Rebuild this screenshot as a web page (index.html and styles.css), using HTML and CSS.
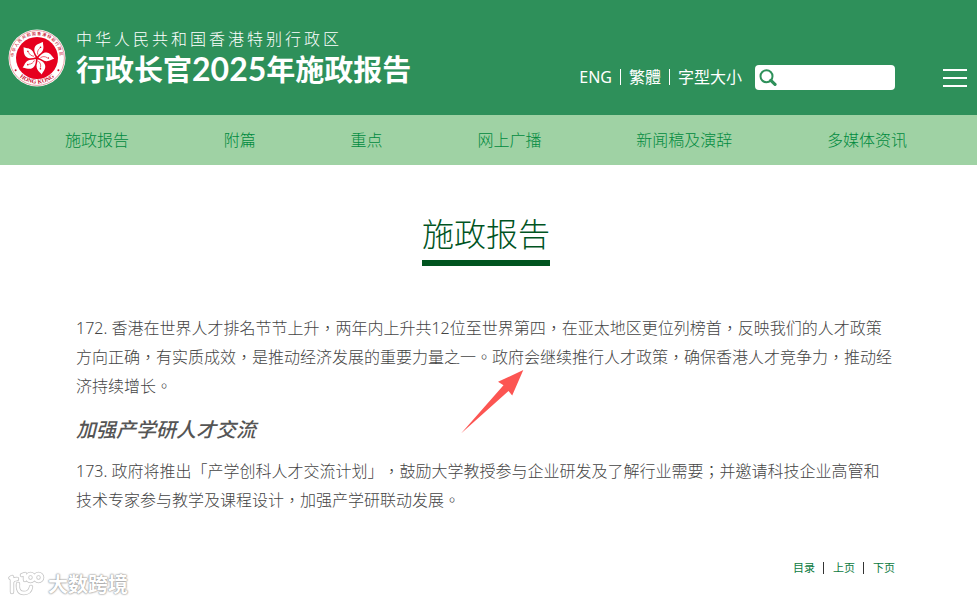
FILE: index.html
```html
<!DOCTYPE html>
<html lang="zh-Hans">
<head>
<meta charset="utf-8">
<meta name="viewport" content="width=device-width, initial-scale=1">
<title>行政长官2025年施政报告</title>
<link rel="stylesheet" href="styles.css">
</head>
<body>
<header class="masthead">
  <a class="brand" href="#">
    <svg class="seal" viewBox="0 0 58 58" aria-hidden="true">
      <defs>
        <path id="ring-top" d="M8.2 39.5A23.2 23.2 0 1 1 49.8 39.5"/>
        <path id="ring-bottom" d="M9 45.2A26 26 0 0 0 49 45.2"/>
        <g id="petal">
          <path fill="#fff" d="M0 -1.5C-2.4 -3.6 -5 -6.5 -4.4 -10C-3.8 -13.2 -1.4 -14.4 2.6 -17C2.6 -14.6 4.8 -12.6 4.2 -8.8C3.8 -5.8 1.2 -4.6 0 -1.5Z"/>
          <path fill="none" stroke="#e6001f" stroke-width=".6" d="M0 -3.5C-1.2 -6 -.8 -8.3 .8 -10.2"/>
          <circle cx="1.2" cy="-11.2" r=".8" fill="#e6001f"/>
        </g>
      </defs>
      <circle cx="29" cy="29" r="28.5" fill="#fff"/>
      <circle cx="29" cy="29" r="27.4" fill="none" stroke="#d8606a" stroke-width=".6"/>
      <circle cx="29" cy="29" r="21" fill="#e6001f"/>
      <g transform="translate(29 29)">
        <use href="#petal" transform="rotate(12)"/>
        <use href="#petal" transform="rotate(84)"/>
        <use href="#petal" transform="rotate(156)"/>
        <use href="#petal" transform="rotate(228)"/>
        <use href="#petal" transform="rotate(300)"/>
      </g>
      <text class="seal-cjk"><textPath href="#ring-top" startOffset="50%">中华人民共和国香港特别行政区</textPath></text>
      <text class="seal-latin"><textPath href="#ring-bottom" startOffset="50%">HONG KONG</textPath></text>
      <circle cx="7.6" cy="41.2" r="1" fill="#c8102e"/>
      <circle cx="50.4" cy="41.2" r="1" fill="#c8102e"/>
    </svg>
    <span class="brand-text">
      <span class="region">中华人民共和国香港特别行政区</span>
      <span class="site-name">行政长官<span class="year">2025</span>年施政报告</span>
    </span>
  </a>
  <div class="tools">
    <nav class="tool-links" aria-label="语言">
      <a href="#">ENG</a>
      <a href="#" lang="zh-Hant">繁體</a>
      <a href="#">字型大小</a>
    </nav>
    <form class="search" role="search">
      <svg class="search-icon" viewBox="0 0 18 18" aria-hidden="true">
        <circle cx="7.5" cy="7.3" r="6" fill="none" stroke="#2e905a" stroke-width="2"/>
        <path d="M11.8 11.4L16 15.4" stroke="#2e905a" stroke-width="3.2" stroke-linecap="round"/>
      </svg>
      <input type="search" aria-label="搜寻">
    </form>
    <button class="menu" type="button" aria-label="选单"><span></span><span></span><span></span></button>
  </div>
</header>

<nav class="main-nav" aria-label="主选单">
  <a href="#">施政报告</a>
  <a href="#">附篇</a>
  <a href="#">重点</a>
  <a href="#">网上广播</a>
  <a href="#">新闻稿及演辞</a>
  <a href="#">多媒体资讯</a>
</nav>

<main class="content">
  <h1>施政报告</h1>
  <div class="article" lang="zh-Hant">
    <p>172. 香港在世界人才排名节节上升，两年内上升共12位至世界第四，在亚太地区更位列榜首，反映我们的人才政策方向正确，有实质成效，是推动经济发展的重要力量之一。政府会继续推行人才政策，确保香港人才竞争力，推动经济持续增长。</p>
    <h2>加强产学研人才交流</h2>
    <p>173. 政府将推出「产学创科人才交流计划」，鼓励大学教授参与企业研发及了解行业需要；并邀请科技企业高管和技术专家参与教学及课程设计，加强产学研联动发展。</p>
    <svg class="pointer" viewBox="0 0 63 64" aria-hidden="true">
      <path fill="#fc5552" d="M62.3 0L37 11.8L42.5 15.3L0 63.5L47.5 21L51.2 25.6Z"/>
    </svg>
  </div>
  <nav class="pager" aria-label="分页">
    <a href="#">目录</a>
    <a href="#">上页</a>
    <a href="#">下页</a>
  </nav>
</main>

<div class="watermark">
  <svg viewBox="0 0 38 26" aria-hidden="true">
    <g fill="none" stroke-linecap="round" stroke-linejoin="round">
      <g stroke="#c4c4c4" stroke-width="4.4">
        <path d="M2.5 7L4 6V21M4 11Q5 8 9 8M10 13Q9 22 16 22Q22 22 23 16M14 4L17 3V9"/>
        <circle cx="22.5" cy="6.5" r="3.6"/><circle cx="30.5" cy="6.5" r="3.6"/>
      </g>
      <g stroke="#fff" stroke-width="2.8">
        <path d="M2.5 7L4 6V21M4 11Q5 8 9 8M10 13Q9 22 16 22Q22 22 23 16M14 4L17 3V9"/>
        <circle cx="22.5" cy="6.5" r="3.6"/><circle cx="30.5" cy="6.5" r="3.6"/>
      </g>
    </g>
  </svg>
  <span>大数跨境</span>
</div>
</body>
</html>
```
FILE: styles.css
```css
* { box-sizing: border-box; }

body {
  margin: 0;
  background: #fff;
  color: #444;
  font: 300 16px/24px "Noto Sans", "Noto Sans CJK SC", sans-serif;
  text-spacing-trim: space-all;
}

a { color: inherit; text-decoration: none; }

.masthead {
  display: flex;
  justify-content: space-between;
  min-height: 115px;
  padding: 0 10px 0 8px;
  background: #2e905a;
  color: #fff;
}

.brand { display: flex; align-items: center; gap: 10px; }
.seal { width: 58px; height: 58px; flex: none; }
.seal text { fill: #c8102e; text-anchor: middle; }
.seal-cjk { font: 500 4px "Noto Sans CJK SC", sans-serif; letter-spacing: 1px; }
.seal-latin { font: 700 6px "Liberation Serif", serif; }

.brand-text {
  display: flex;
  flex-direction: column;
  padding-bottom: 4px;
  white-space: nowrap;
}
.region { font-size: 16px; line-height: 24px; letter-spacing: 3px; }
.site-name {
  font: 700 29px/34px "Noto Sans CJK SC", sans-serif;
}
.year { font-family: Lato, sans-serif; font-size: 32px; line-height: 32px; }

.tools { display: flex; align-items: center; padding-top: 40px; }
.tool-links {
  display: flex;
  align-items: center;
  padding-bottom: 2px;
  font-weight: 400;
  white-space: nowrap;
}
.tool-links a { line-height: 16px; }
.tool-links a + a { margin-left: 8px; padding-left: 8px; border-left: 1px solid #fff; }

.search {
  display: flex;
  align-items: center;
  width: 140px;
  height: 25px;
  margin: 0 48px 0 13px;
  padding: 0 4px;
  border-radius: 4px;
  background: #fff;
}
.search-icon { width: 18px; height: 18px; flex: none; }
.search input {
  flex: 1;
  min-width: 0;
  padding: 0 4px;
  border: 0;
  outline: 0;
  background: none;
  font: inherit;
}

.menu {
  display: flex;
  flex-direction: column;
  gap: 6px;
  width: 24px;
  padding: 0;
  border: 0;
  background: none;
}
.menu span { height: 2px; width: 100%; background: #fff; }

.main-nav {
  display: flex;
  justify-content: space-between;
  align-items: center;
  min-height: 50px;
  padding: 0 70px 0 65px;
  background: #9fd2a4;
  color: #008a3e;
}

.content { padding: 45px 81px 0 76px; }

h1 {
  width: max-content;
  margin: 0 auto 48px;
  padding-bottom: 2px;
  border-bottom: 6px solid #00541f;
  color: #00541f;
  font-size: 32px;
  font-weight: 300;
  line-height: 48px;
}

.article {
  position: relative;
  padding-right: 3px;
  font-family: "Noto Sans", "Noto Sans CJK TC", sans-serif;
}
.article p { margin: 0; line-height: 29px; }
.article h2 {
  margin: 14px 0 12px;
  color: #555;
  font-size: 20px;
  font-style: italic;
  font-weight: 500;
  line-height: 30px;
}
.pointer { position: absolute; left: 385px; top: 56px; width: 63px; height: 64px; }

.pager {
  display: flex;
  justify-content: flex-end;
  margin: 41px 1px 0 0;
  color: #0b7a40;
  font-size: 11px;
  font-weight: 400;
}
.pager a { margin: 6px 0; line-height: 12px; }
.pager a + a { margin-left: 8px; padding-left: 9px; border-left: 1px solid #333; }

.watermark {
  position: absolute;
  left: 8px;
  bottom: 5px;
  display: flex;
  align-items: center;
  gap: 2px;
  color: #fff;
  font: 700 20px/26px "Noto Sans CJK SC", sans-serif;
  text-shadow: 0 0 2px #999, 0 0 2px #aaa, 0 0 1px #aaa;
}
.watermark svg { width: 38px; height: 26px; }
```
